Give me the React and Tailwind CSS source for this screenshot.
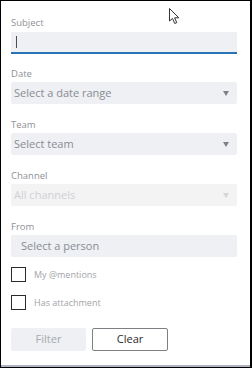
import React, { useState } from "react";

const font = { fontFamily: '"Open Sans", "Noto Sans", sans-serif' };

const Caret = ({ light }) => (
  <svg
    width="6"
    height="5"
    viewBox="0 0 6 5"
    className={light ? "text-[#d4d6da]" : "text-[#7c808a]"}
  >
    <path d="M0 0h6L3 5z" fill="currentColor" />
  </svg>
);

const Field = ({ label, children }) => (
  <div className="flex flex-col">
    <span className="h-[12px] text-[9.5px] leading-[12px] text-[#8f9197]">
      {label}
    </span>
    <div className="mt-[2px]">{children}</div>
  </div>
);

const SelectBox = ({ text, disabled }) => (
  <div
    className={`flex h-[22px] items-center justify-between rounded-[2px] pl-[3px] pr-[8px] text-[11px] ${
      disabled ? "bg-[#f3f3f3] text-[#cfd0d3]" : "bg-[#eef0f4] text-[#8a8c93]"
    }`}
  >
    <span>{text}</span>
    <Caret light={disabled} />
  </div>
);

const Check = ({ label }) => (
  <label className="flex h-[15px] items-center gap-[8px]">
    <span className="block h-[15px] w-[15px] border border-[#2b2b2b] bg-white" />
    <span className="text-[9px] text-[#a2a4a9]">{label}</span>
  </label>
);

export default function App() {
  const [subject, setSubject] = useState("");

  return (
    <div
      className="relative h-[368px] w-[252px] overflow-hidden border-t border-l border-r-2 border-b border-black bg-white"
      style={font}
    >
      <div className="flex flex-col pl-[10px] pr-[13px] pt-[16px]">
        <div className="flex flex-col">
          <span className="h-[12px] text-[9.5px] leading-[12px] text-[#8f9197]">
            Subject
          </span>
          <div className="mt-[3px] flex h-[22px] items-center border-b-2 border-[#2a73b5] bg-[#eef0f4] pl-[5px]">
            <span className="block h-[12px] w-[1px] bg-[#4a4d57]" />
            <input
              value={subject}
              onChange={(e) => setSubject(e.target.value)}
              className="hidden"
            />
          </div>
        </div>

        <div className="mt-[14px] flex flex-col gap-[15px]">
          <Field label="Date">
            <SelectBox text="Select a date range" />
          </Field>
          <Field label="Team">
            <SelectBox text="Select team" />
          </Field>
          <Field label="Channel">
            <SelectBox text="All channels" disabled />
          </Field>
          <Field label="From">
            <div className="flex h-[22px] items-center rounded-[2px] bg-[#eef0f4] pl-[10px] text-[11px] text-[#8a8c93]">
              Select a person
            </div>
          </Field>
        </div>

        <div className="mt-[10px] flex flex-col gap-[13px]">
          <Check label="My @mentions" />
          <Check label="Has attachment" />
        </div>

        <div className="mt-[18px] flex gap-[6px]">
          <button className="h-[23px] w-[75px] rounded-[2px] bg-[#eef0f4] text-[11px] text-[#a7a9ae]">
            Filter
          </button>
          <button className="h-[23px] w-[76px] rounded-[2px] border border-[#7d7f84] bg-white text-[11px] text-[#2b2b2b]">
            Clear
          </button>
        </div>
      </div>

      <div className="absolute bottom-0 left-0 right-0 h-[2px] bg-[#aeb3bf]" />

      <svg
        className="absolute left-[168px] top-[7px]"
        width="12"
        height="17"
        viewBox="0 0 12 17"
      >
        <path
          d="M0.5 0.5 L0.5 13 L3.5 10.5 L5.8 15.5 L7.8 14.6 L5.6 9.8 L9.8 9.8 Z"
          fill="white"
          stroke="#333"
          strokeWidth="1"
        />
      </svg>
    </div>
  );
}
